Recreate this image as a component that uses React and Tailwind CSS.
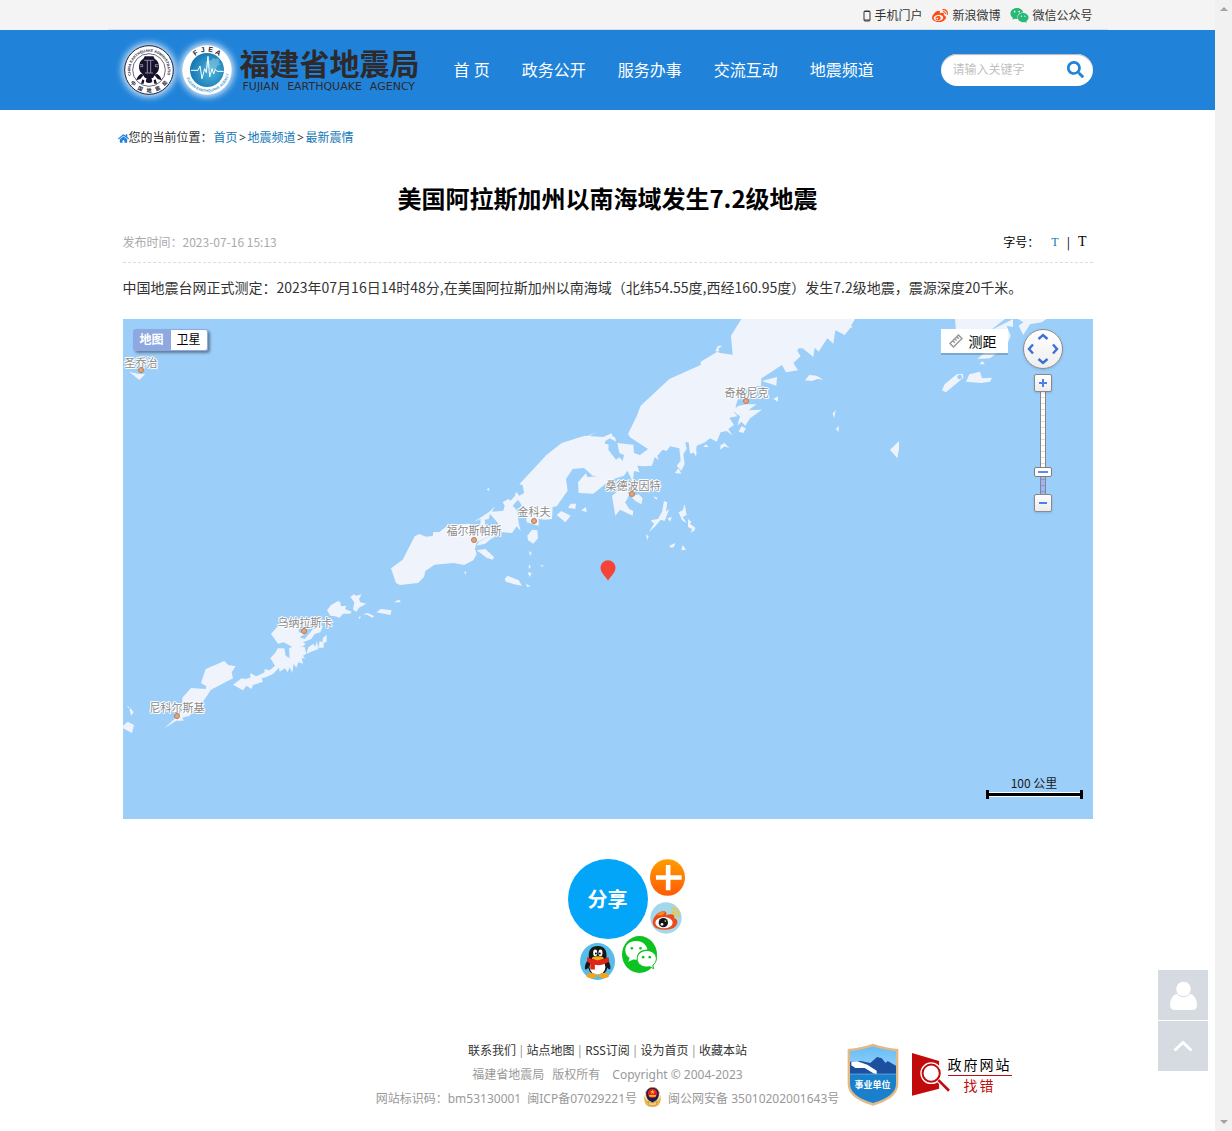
import React, { useState } from 'react';
import { FaHome, FaWeibo, FaWeixin, FaSearch } from 'react-icons/fa';

const navItems = ['首 页', '政务公开', '服务办事', '交流互动', '地震频道'];
const footerLinks = ['联系我们', '站点地图', 'RSS订阅', '设为首页', '收藏本站'];

const towns = [
  { name: '圣乔治', dot: 'left-[15px] top-[48px]', label: 'left-[2px] top-[37px]' },
  { name: '奇格尼克', dot: 'left-[620px] top-[79px]', label: 'left-[602px] top-[67px]' },
  { name: '桑德波因特', dot: 'left-[506px] top-[172px]', label: 'left-[483px] top-[160px]' },
  { name: '金科夫', dot: 'left-[408px] top-[199px]', label: 'left-[395px] top-[186px]' },
  { name: '福尔斯帕斯', dot: 'left-[348px] top-[218px]', label: 'left-[324px] top-[205px]' },
  { name: '乌纳拉斯卡', dot: 'left-[178px] top-[309px]', label: 'left-[155px] top-[297px]' },
  { name: '尼科尔斯基', dot: 'left-[51px] top-[394px]', label: 'left-[27px] top-[382px]' },
];

const ringChars = [
  { char: '中', angle: 50 },
  { char: '国', angle: 25 },
  { char: '地', angle: 0 },
  { char: '震', angle: -25 },
  { char: '局', angle: -50 },
];

const topLetters = [
  { char: 'F', angle: -34 },
  { char: 'J', angle: -12 },
  { char: 'E', angle: 10 },
  { char: 'A', angle: 33 },
];

const Seals = () => (
  <svg viewBox="0 0 330 180" className="h-[60px] w-[110px] overflow-visible" aria-hidden="true">
    <defs>
      <filter id="glow" x="-30%" y="-30%" width="160%" height="160%">
        <feGaussianBlur stdDeviation="9" />
      </filter>
      <radialGradient id="globe" cx="60%" cy="55%" r="60%">
        <stop offset="0" stopColor="#4cb4dc" />
        <stop offset="1" stopColor="#1577b4" />
      </radialGradient>
      <path id="ringTop" d="M24 106A56 56 0 1 1 132 106" />
      <path id="jLow" d="M187 105A67 67 0 0 0 317 105" />
    </defs>
    <circle cx="78" cy="90" r="82" fill="#fff" opacity=".75" filter="url(#glow)" />
    <circle cx="252" cy="90" r="82" fill="#fff" opacity=".75" filter="url(#glow)" />
    <circle cx="78" cy="90" r="73" fill="#fff" stroke="#221d38" strokeWidth="3" />
    <circle cx="78" cy="90" r="49" fill="#fff" stroke="#221d38" strokeWidth="2" />
    <g fill="#221d38" fontFamily="Liberation Sans" fontWeight="700">
      <text fontSize="11">
        <textPath href="#ringTop">CHINA EARTHQUAKE ADMINISTRATION</textPath>
      </text>
      {ringChars.map(({ char, angle }) => (
        <text key={char} x="78" y="157" fontSize="15" textAnchor="middle" fontFamily="Noto Sans CJK SC" transform={`rotate(${angle} 78 90)`}>
          {char}
        </text>
      ))}
    </g>
    <g fill="#17122c">
      <path d="M65 49h26l4 7q13 7 13 25 0 14-11 22l-7 11H66l-7-11Q48 95 48 81q0-18 13-25z" />
      <path d="M54 101l8 4-10 12-12 4q1-11 14-20zM102 101l-8 4 10 12 12 4q-1-11-14-20zM71 112h14l3 13q-10 8-20 0zM58 118l6 3-2 10h-8zM98 118l-6 3 2 10h8z" />
    </g>
    <g stroke="#c9c7d8" strokeWidth="2" fill="none">
      <path d="M51 74h8v6h-8M105 74h-8v6h8M64 61h28M66 99h24M73 62v36M83 62v36" />
    </g>
    <circle cx="252" cy="90" r="74" fill="#fff" />
    <circle cx="252" cy="90" r="51" fill="url(#globe)" />
    <path d="M248 65l16-4 8-7 6 4 6-4 6 8-4 6 8 4-12 6-4 12-12 2-8-8-10-2z" fill="#8ecce6" opacity=".55" />
    <path d="M204 91h21l6-13 6 38 8-30 5 12 5-49 5 62 7-25 5 16 5-14 5 6h20" fill="none" stroke="#fff" strokeWidth="3" />
    <g fill="#2b201f" fontFamily="Liberation Sans" fontWeight="700" fontSize="21">
      {topLetters.map(({ char, angle }) => (
        <text key={char} x="252" y="35" textAnchor="middle" transform={`rotate(${angle} 252 90)`}>
          {char}
        </text>
      ))}
    </g>
    <text fontSize="11" fontFamily="Liberation Sans" fontWeight="700" fill="#3b9bd0">
      <textPath href="#jLow" startOffset="6%">FUJIAN EARTHQUAKE AGENCY</textPath>
    </text>
  </svg>
);

// Coastline of the Alaska Peninsula and the Aleutians
const Coast = () => (
  <svg viewBox="0 0 2910 1500" preserveAspectRatio="xMinYMin slice" className="h-full w-full" aria-hidden="true">
    <g fill="#eff3fc">
      <path d="M18 158l30 7 19 0-18 18z" />
      <path d="M444 945L470 915 525 920 528 940 545 945 530 955 545 960 570 930 600 920 592 940 575 945 565 960 540 970 548 975 540 982 512 986 482 970 465 974z" />
      <path d="M458 1000L464 988 484 988 488 1010 500 1018 498 988 515 980 545 984 550 1004 540 1010 546 1020 536 1016 540 1034 526 1030 520 1046 512 1034 508 1062 500 1045 494 1060 486 1048 470 1058 468 1046 450 1065 430 1074 416 1078 420 1088 390 1098 386 1110 370 1100 360 1114 330 1097 356 1078 368 1080 382 1076 382 1062 400 1072 425 1060 424 1050 440 1054 456 1040 442 1018z" />
      <path d="M550 1004L556 985 572 974 576 984 582 966 586 990zM586 986L590 966 598 970 600 956 611 948 611 968 602 972 602 986z" />
      <path d="M612 874L624 858 645 846 652 850 654 862 670 860 666 870 686 878 682 884 660 884 650 896 636 892 622 890zM682 834L692 826 700 830 716 826 708 840 712 850 730 854 708 866 700 878 690 872 694 850zM706 894l8-2-4 8zM720 886l14-4 20 10-6 4-14-8zM760 880l14-10 32 4-4 14zM815 850l14-7 4 5z" />
      <path d="M234 1092L248 1050 304 1026 316 1038 338 1042 326 1060 330 1078 264 1112 240 1148 212 1170 200 1190 178 1196 182 1205 160 1205 124 1228 150 1204 166 1190 178 1170 178 1136 204 1107 248 1110 250 1102z" />
      <path d="M12 1160l8 6-4 2zM20 1172l2-6 10 14-8 10zM0 1220l14-12 19 10-6 24-27-14z" />
    </g>
    <g fill="#eff3fc" transform="translate(771 0)">
      <path d="M33 748L68 722 104 652 118 645 138 653 158 651 160 639 178 639 204 619 264 614 300 624 330 650 290 670 285 690 290 705 280 724 252 738 220 732 164 737 136 756 132 774 114 792 60 798 48 792z" />
      <path d="M282 608L310 590 328 578 345 562 336 578 370 575 374 560 368 550 385 540 392 545 405 530 408 518 418 530 432 522 428 498 418 496 500 407 545 372 590 358 615 350 670 354 695 343 698 352 706 356 708 368 690 358 676 366 674 374 686 376 685 392 708 422 718 415 728 426 732 408 718 402 712 372 760 377 762 402 780 408 804 390 750 355 744 345 770 292 782 260 868 180 962 138 962 128 1012 98 1020 102 1058 107 1053 50 1084 0 1425 0 1413 20 1418 24 1410 28 1394 48 1366 34 1360 74 1342 58 1316 98 1304 86 1300 114 1268 88 1256 88 1252 96 1262 112 1240 132 1254 154 1218 160 1206 138 1144 178 1143 202 1108 202 1084 225 1072 245 1066 265 1085 268 1082 280 1062 280 1072 292 1048 296 1062 318 1045 330 1058 350 1040 336 1022 340 1010 368 990 358 975 370 950 380 948 398 930 404 926 370 916 370 920 390 910 405 914 435 904 455 890 440 902 425 898 388 870 382 860 396 848 392 832 410 836 424 824 414 816 440 790 442 772 440 778 460 762 456 758 490 750 470 742 455 732 470 690 484 640 524 596 522 594 490 618 462 622 474 655 472 638 470 612 447 578 450 558 480 563 515 530 562 518 564 516 600 498 602 476 600 476 620 466 618 440 610 436 575 414 542 398 560 412 575 416 612 422 636 410 622 396 642 366 640 362 622 330 585 326 600 314 602 316 620 300 625 302 600z" />
      <path d="M290 680L296 668 340 645 362 642 330 662 316 674zM290 694L316 690 342 714 338 722 320 716zM374 780L382 770 416 784 426 800 402 796 378 788zM442 650L456 632 472 634 474 658 460 674 444 664zM447 696l8 6-5 9zM489 682l5 8zM447 736l6 8-7 5zM480 738l13 2-7 3zM443 760l12 2-6 12zM438 794l14 8-10 2zM530 588L544 576 572 590 556 610zM576 596l10 10zM564 566L572 554 588 554 586 570zM604 574l14-10 2 16zM570 650l6-8zM600 634l6 6zM530 700l9 8zM320 512l7-6 1 10zM252 758l6 0 0 10zM42 850l14-8 6 8z" />
      <path d="M696 530L732 502 750 512 732 540 722 538 750 520 742 540 735 550 748 570 760 576 758 590 720 572 706 590z" />
      <path d="M752 532L776 526 788 538 784 556 766 546zM819 532l14 4-4 6zM826 545l10 8zM852 546L862 550 858 578 868 570 854 606 842 602 826 622 806 640 822 614 812 604 834 600 846 578zM798 646l8 6-4 12zM862 598l14-4-6 14zM896 580L908 574 914 556 920 588 908 594 920 612 906 604zM924 600L934 608 930 614 946 626 944 634 932 642 936 630 924 624zM868 680L886 672 882 684 872 686zM904 694L908 678 918 692z" />
      <path d="M970 384l8-8 8 8zM1020 392L1022 378 1034 372 1048 388 1034 382zM940 400l10-4-2 16zM884 462L896 448 904 464zM1006 96L1014 80 1028 80 1016 88 1016 98zM610 356L652 338 618 356z" />
      <path d="M1072 262L1098 256 1130 256 1105 274 1146 272 1110 298 1096 320 1084 308 1072 320 1080 292 1066 282zM1076 338L1084 322 1098 328 1090 342z" />
      <path d="M1145 186l46-12-2 26zM1275 184L1288 168 1310 170 1330 182 1312 180 1296 186zM1180 240l14-8 0 16zM1358 284l9-12-4 26zM1368 330l8-10 0 20zM1530 392L1557 366 1557 390 1552 418z" />
    </g>
    <g fill="#eff3fc" transform="translate(1851 0)">
      <path d="M645 0L795 0 750 35 790 15 819 0 819 24 800 20 812 50 800 80 750 118 712 120 735 100 650 60zM834 0L920 0 905 10 870 16 850 48 836 20 850 10zM718 136L728 126 734 136z" />
      <path d="M606 214L614 196 650 166 668 164 670 176 618 220zM678 188L688 166 720 158 726 178 756 176 750 188 722 192z" />
    </g>
    <circle cx="2510" cy="174" r="7" fill="#9bcef9" />
  </svg>
);

const Chevron = ({ className }) => (
  <svg viewBox="0 0 12 12" className={className} fill="none" stroke="#3f6fd6" strokeWidth="2.4">
    <path d="M1.500 8L6 4l4.500 4" />
  </svg>
);

const zoomButton =
  'relative z-10 flex h-[18px] w-[18px] items-center justify-center rounded-[2px] border border-[#8a8a8a] bg-gradient-to-b from-white to-[#ececec] shadow';

const MapPanel = () => {
  const [zoom, setZoom] = useState(6);
  return (
    <section className="relative h-[500px] overflow-hidden bg-[#9bcef9]">
      <Coast />
      {towns.map((town) => (
        <React.Fragment key={town.name}>
          <span
            className={`absolute text-[11px] leading-3 whitespace-nowrap text-[#8b8b8b] [text-shadow:1px_0_#fff,-1px_0_#fff,0_1px_#fff,0_-1px_#fff,1px_1px_#fff,-1px_-1px_#fff] ${town.label}`}
          >
            {town.name}
          </span>
          <span className={`absolute h-[6px] w-[6px] rounded-full border border-[#b97a52] bg-[#e5a67c] ${town.dot}`} />
        </React.Fragment>
      ))}

      <svg viewBox="0 0 16 21" className="absolute top-[241px] left-1/2 h-[21px] w-4 -translate-x-1/2">
        <path d="M8 21C7 17.500 .5 13.500 .5 7.800a7.500 7.500 0 0 1 15 0C15.500 13.500 9 17.500 8 21z" fill="#f64436" />
      </svg>

      <div className="absolute top-[10px] left-[10px] flex h-[22px] rounded-[3px] text-xs shadow-[2px_2px_3px_rgba(0,0,0,0.4)]">
        <button className="w-[38px] rounded-l-[3px] bg-[#8ea8e0] pb-[2px] font-bold text-white">地图</button>
        <button className="w-[37px] rounded-r-[3px] border border-l-0 border-[#8ea8e0] bg-white pb-[2px] text-black">卫星</button>
      </div>

      <button className="absolute top-[10px] right-[85px] flex h-6 w-[67px] items-center gap-[6px] bg-white pl-2 text-sm text-black shadow-[0_2px_0_rgba(90,130,170,0.5)]">
        <svg viewBox="0 0 14 14" className="h-[14px] w-[14px]" fill="none" stroke="#999" strokeWidth="1.500">
          <path d="M1 9.500L9.500 1 13 4.500 4.500 13z" />
          <path d="M4 7l1.800 1.800M6 5l1.500 1.500M8 3l1.800 1.800" />
        </svg>
        测距
      </button>

      <div className="absolute top-[10px] right-[30px] flex w-10 flex-col items-center">
        <div className="grid h-10 w-10 grid-cols-3 grid-rows-3 place-items-center rounded-full border border-[#8d8d8d] bg-gradient-to-b from-white to-[#eee] p-px shadow">
          <button aria-label="向上" className="col-start-2 row-start-1"><Chevron className="h-3 w-3" /></button>
          <button aria-label="向左" className="col-start-1 row-start-2"><Chevron className="h-3 w-3 -rotate-90" /></button>
          <button aria-label="向右" className="col-start-3 row-start-2"><Chevron className="h-3 w-3 rotate-90" /></button>
          <button aria-label="向下" className="col-start-2 row-start-3"><Chevron className="h-3 w-3 rotate-180" /></button>
        </div>
        <button aria-label="放大" className={`mt-[5px] ${zoomButton}`} onClick={() => setZoom(Math.min(zoom + 1, 19))}>
          <svg viewBox="0 0 8 8" className="h-2 w-2" fill="#4d80e8"><path d="M3 0h2v3h3v2H5v3H3V5H0V3h3z" /></svg>
        </button>
        <div className="relative h-[102px] w-[6px] border-x border-[#868686] bg-[repeating-linear-gradient(#fff_0_5px,#ddd_5px_6px)]">
          <div className="absolute inset-x-0 bottom-0 h-5 bg-[repeating-linear-gradient(#9db5f8_0_5px,#7f99e6_5px_6px)]" />
          <input
            type="range"
            min="3"
            max="19"
            value={zoom}
            aria-label="缩放级别"
            onChange={(e) => setZoom(Number(e.target.value))}
            className="absolute -top-px -left-[7px] h-[104px] w-[18px] appearance-none bg-transparent [direction:rtl] [writing-mode:vertical-lr] [&::-webkit-slider-thumb]:h-[10px] [&::-webkit-slider-thumb]:w-[18px] [&::-webkit-slider-thumb]:appearance-none [&::-webkit-slider-thumb]:rounded-[2px] [&::-webkit-slider-thumb]:border [&::-webkit-slider-thumb]:border-[#808080] [&::-webkit-slider-thumb]:bg-[linear-gradient(90deg,#fff_3px,#5b8cf0_3px_13px,#fff_13px)] [&::-webkit-slider-thumb]:shadow-[inset_0_3px_0_#fff,inset_0_-3px_0_#fff]"
          />
        </div>
        <button aria-label="缩小" className={zoomButton} onClick={() => setZoom(Math.max(zoom - 1, 3))}>
          <span className="h-[2px] w-2 bg-[#4d80e8]" />
        </button>
      </div>

      <div className="absolute right-[10px] bottom-5 w-[97px] text-center text-xs leading-[14px] text-[#1a1a1a]">
        100 公里
        <div className="flex h-[9px] items-center border-x-[3px] border-black">
          <div className="h-[5px] w-full border-y border-white bg-black" />
        </div>
      </div>
    </section>
  );
};

const Share = () => (
  <div className="relative mx-auto mt-10 h-20 w-20">
    <button className="h-20 w-20 rounded-full bg-[#03a5f9] text-xl font-bold text-white">分享</button>
    <button aria-label="更多" className="absolute top-0 left-[82px]">
      <svg viewBox="0 0 106 111" className="h-[37px] w-[35px]">
        <defs>
          <linearGradient id="orange" x2="0" y2="1"><stop stopColor="#ff9d00" /><stop offset="1" stopColor="#ff5a05" /></linearGradient>
        </defs>
        <ellipse cx="53" cy="55.500" rx="53" ry="55.500" fill="url(#orange)" />
        <path d="M48 18h14v31h34v13H62v32H48V62H18V49h30z" fill="#fff" />
      </svg>
    </button>
    <button aria-label="新浪微博" className="absolute top-[43px] left-[82px]">
      <svg viewBox="0 0 96 96" className="h-8 w-8">
        <circle cx="48" cy="48" r="47" fill="#a3d8ec" />
        <path d="M8 62C8 42 30 24 44 28q8 3 4 12 14-6 22-2 6 4 2 10 12 4 10 15-4 20-38 20Q10 83 8 62z" fill="#ec4a18" />
        <path d="M20 40q14-16 25-10-2 8-8 10z" fill="#f98a24" />
        <ellipse cx="42" cy="62" rx="26" ry="17" fill="#fff" />
        <circle cx="40" cy="62" r="14" fill="#151515" />
        <circle cx="36" cy="67" r="4" fill="#fff" /><circle cx="46" cy="57" r="2.500" fill="#ddd" />
        <path d="M64 18q23 1 22 28M64 30q11 1 11 14" fill="none" stroke="#f5c535" strokeWidth="6" />
      </svg>
    </button>
    <button aria-label="微信" className="absolute top-[77px] left-[54px]">
      <svg viewBox="0 0 106 112" className="h-[37px] w-[35px]">
        <ellipse cx="53" cy="56" rx="53" ry="56" fill="#0cc321" />
        <path d="M42 15C22 15 10 27 10 43c0 11 5 18 13 23l-4 12 15-7 12 1c-3-20 10-31 31-31-3-17-17-26-35-26z" fill="#fff" />
        <path d="M75 44c-17 0-29 11-29 25s12 25 29 25l9-1 12 6-3-10c6-5 11-11 11-20 0-14-12-25-29-25z" fill="#fff" stroke="#0cc321" strokeWidth="3" />
        <circle cx="30" cy="37" r="4" fill="#0cc321" /><circle cx="56" cy="37" r="4" fill="#0cc321" />
        <circle cx="64" cy="64" r="4" fill="#0cc321" /><circle cx="84" cy="64" r="4" fill="#0cc321" />
      </svg>
    </button>
    <button aria-label="QQ" className="absolute top-[84px] left-[12px]">
      <svg viewBox="0 0 106 112" className="h-[37px] w-[35px]">
        <ellipse cx="53" cy="56" rx="53" ry="56" fill="#55bdea" />
        <path d="M27 46C24 20 35 9 54 9s29 12 26 37c9 12 14 22 12 33q-3 4-9-4-4 21-29 21T25 75q-6 8-10 4c-2-10 4-22 12-33z" fill="#161616" />
        <ellipse cx="53" cy="73" rx="24" ry="23" fill="#fff" />
        <ellipse cx="46" cy="30" rx="6" ry="10" fill="#fff" /><ellipse cx="62" cy="30" rx="6" ry="10" fill="#fff" />
        <circle cx="48" cy="32" r="3" /><circle cx="60" cy="32" r="3" />
        <ellipse cx="54" cy="46" rx="18" ry="6" fill="#f5ab16" />
        <path d="M22 42q31 20 64 0l3 14q-24 15-44 10v14H31V62l-10-6z" fill="#df2418" />
        <ellipse cx="35" cy="99" rx="16" ry="8" fill="#f2a51c" /><ellipse cx="72" cy="99" rx="16" ry="8" fill="#f2a51c" />
      </svg>
    </button>
  </div>
);

const PoliceBadge = () => (
  <svg viewBox="0 0 56 60" className="-mt-1 h-5 w-[19px]" aria-hidden="true">
    <path d="M4 24Q-2 60 28 60T52 24q-4 22-24 22T4 24z" fill="#edb54c" />
    <path d="M8 16Q14 1 28 1t20 15q2 24-20 31Q6 40 8 16z" fill="#181b56" stroke="#e3b44f" strokeWidth="2" />
    <circle cx="28" cy="19" r="14" fill="#e32219" />
    <path d="M28 8l2 5h5l-4 3 2 5-5-3-5 3 2-5-4-3h5zM18 24h20v5H18z" fill="#f6bc35" />
    <path d="M14 42l14 6 14-6-4 14H18z" fill="#f5cf7d" stroke="#c58a2c" strokeWidth="2" />
  </svg>
);

const UnitBadge = () => (
  <a href="#unit" aria-label="事业单位" className="relative block h-[63px] w-[52px]">
    <svg viewBox="0 0 156 189" className="h-full w-full">
      <defs>
        <linearGradient id="sky" x2="0" y2="1"><stop stopColor="#66bdf5" /><stop offset=".5" stopColor="#9bd5fa" /></linearGradient>
      </defs>
      <path d="M2 18Q45 14 78 2q33 12 76 16v105q0 43-76 65Q2 166 2 123z" fill="#e5b981" />
      <path d="M9 25Q48 20 78 10q30 10 69 15v97q0 38-69 58Q9 160 9 122z" fill="url(#sky)" />
      <path d="M9 92V56l32-2 29 6 20-18 14 4 12 14 6-6 25 14v24z" fill="#1c4f9e" />
      <path d="M9 94h138v28q0 38-69 58Q9 160 9 122z" fill="#1b80cc" />
      <path d="M13 56l18-1 30 10 28 18 0 10-10-2-26-16-28 0-12-8z" fill="#fff" />
    </svg>
    <span className="absolute inset-x-0 top-[35px] text-center text-[9px] leading-[14px] font-bold text-white">事业单位</span>
  </a>
);

const ErrorReport = () => (
  <a href="#report" className="flex items-center text-sm">
    <svg viewBox="0 0 118 130" className="h-[43px] w-[39px]" aria-hidden="true">
      <path d="M0 0l82 24v84L0 129z" fill="#c20a0d" />
      <circle cx="58" cy="61" r="27" fill="#c20a0d" stroke="#fff" strokeWidth="12" />
      <circle cx="58" cy="61" r="26" fill="#fff" stroke="#c20a0d" strokeWidth="6" />
      <path d="M82 84l32 32" stroke="#fff" strokeWidth="14" />
      <path d="M80 82l32 32" stroke="#c20a0d" strokeWidth="8" />
    </svg>
    <span className="-ml-[3px] flex flex-col pt-[3px] text-center leading-5 tracking-[2px]">
      <span className="border-b border-[#c20a0d] text-black">政府网站</span>
      <span className="text-[#c20a0d]">找错</span>
    </span>
  </a>
);

const App = () => {
  const [keyword, setKeyword] = useState('');

  return (
    <div className="flex min-h-screen bg-white font-['Noto_Sans','Noto_Sans_CJK_SC',sans-serif] text-xs text-[#333]">
      <div className="min-w-0 flex-1">
        <div className="bg-[#f4f4f4]">
          <div className="mx-auto flex h-[30px] max-w-[1000px] items-center justify-end gap-[10px] border-b border-[#d3e0ec] px-[15px] pt-[2px]">
            <a href="#mobile" className="flex items-center gap-[3px]">
              <svg viewBox="0 0 8 12" className="h-3 w-2" fill="none" stroke="#333">
                <rect x="1" y="1" width="6" height="10" rx="1" />
                <path d="M1 1.500h6M1 10h6" />
              </svg>
              手机门户
            </a>
            <a href="#weibo" className="flex items-center gap-1"><FaWeibo className="h-4 w-4 text-[#ff4a0c]" />新浪微博</a>
            <a href="#wechat" className="flex items-center gap-[3px]"><FaWeixin className="h-[19px] w-[19px] text-[#2bb877]" />微信公众号</a>
          </div>
        </div>

        <header className="bg-[#2083d9]">
          <div className="mx-auto flex h-20 max-w-[1000px] items-center px-[15px]">
            <a href="#home" className="flex items-center gap-[7px] text-[#2e2a2b]">
              <Seals />
              <span className="flex flex-col">
                <span className="text-[30px] leading-8 font-bold">福建省地震局</span>
                <span className="flex gap-2 pt-px pl-[3px] font-['DejaVu_Sans'] text-[11px] leading-3">
                  <span>FUJIAN</span>
                  <span>EARTHQUAKE</span>
                  <span>AGENCY</span>
                </span>
              </span>
            </a>
            <nav className="ml-[34px] flex gap-8 text-base whitespace-nowrap text-white">
              {navItems.map((item) => (
                <a key={item} href="#nav">{item}</a>
              ))}
            </nav>
            <form className="ml-auto flex h-8 w-[152px] items-center rounded-full bg-white px-3 shadow-[inset_0_1px_1px_#b9b9b9]">
              <input
                value={keyword}
                onChange={(e) => setKeyword(e.target.value)}
                placeholder="请输入关键字"
                aria-label="请输入关键字"
                className="w-full min-w-0 outline-none placeholder:text-[#bfbfbf]"
              />
              <button type="button" aria-label="搜索" className="-mr-[3px] pb-[2px] text-[#2083d9]"><FaSearch className="h-[17px] w-[17px]" /></button>
            </form>
          </div>
        </header>

        <div className="mx-auto flex max-w-[1000px] items-center px-[10px] pt-5 leading-4">
          <FaHome className="h-[11px] w-[11px] text-[#2083d9]" />
          <span className="mr-px">您的当前位置：</span>
          <a href="#home" className="text-[#1277b8]">首页</a>
          <span className="w-[10px] text-center">&gt;</span>
          <a href="#channel" className="text-[#1277b8]">地震频道</a>
          <span className="w-[10px] text-center">&gt;</span>
          <a href="#latest" className="text-[#1277b8]">最新震情</a>
        </div>

        <main className="mx-auto max-w-[1000px] px-[15px] font-['Noto_Sans_CJK_SC',sans-serif]">
          <h1 className="mt-[34px] text-center text-2xl leading-9 font-bold text-black">美国阿拉斯加州以南海域发生7.2级地震</h1>
          <div className="mt-[5px] flex h-[42px] items-center justify-between border-b border-dashed border-[#ddd]">
            <span className="text-[#aaa]">发布时间：2023-07-16 15:13</span>
            <span className="flex items-center pr-[6px] text-black">
              <span className="mr-3">字号：</span>
              <button className="font-['Liberation_Serif'] text-xs text-[#1277b8]">T</button>
              <span className="mx-2">|</span>
              <button className="font-['Liberation_Serif'] text-sm">T</button>
            </span>
          </div>
          <p className="mt-[9px] mb-[17px] text-sm leading-[30px]">
            中国地震台网正式测定：2023年07月16日14时48分,在美国阿拉斯加州以南海域（北纬54.55度,西经160.95度）发生7.2级地震，震源深度20千米。
          </p>
          <MapPanel />
          <Share />
        </main>

        <footer className="mt-[100px] grid grid-cols-[1fr_auto_1fr] pb-5 text-center leading-6 text-[#999]">
          <div className="col-start-2 min-w-[470px] whitespace-nowrap">
            <p className="flex justify-center gap-[2px]">
              {footerLinks.map((link, i) => (
                <React.Fragment key={link}>
                  {i > 0 && <span>|</span>}
                  <a href="#footer" className="text-[#333]">{link}</a>
                </React.Fragment>
              ))}
            </p>
            <p className="flex justify-center gap-2">
              <span>福建省地震局</span>
              <span>版权所有</span>
              <span className="pl-1">Copyright © 2004-2023</span>
            </p>
            <p className="flex h-6 items-center justify-center gap-[6px]">
              <span>网站标识码：bm53130001</span>
              <span>闽ICP备07029221号</span>
              <PoliceBadge />
              <span>闽公网安备 35010202001643号</span>
            </p>
          </div>
          <div className="flex items-start gap-[13px] pt-1 pl-1">
            <UnitBadge />
            <div className="pt-[9px]"><ErrorReport /></div>
          </div>
        </footer>
      </div>

      <aside className="fixed right-6 bottom-[60px] flex flex-col gap-px">
        <button aria-label="个人中心" className="flex h-[50px] w-[50px] items-center justify-center bg-[#d5dbe1]">
          <svg viewBox="0 0 27 29" className="h-[29px] w-[27px]" fill="#fff">
            <path d="M6 13h15q6 3 6 11 0 5-5 5H5q-5 0-5-5 0-8 6-11z" />
            <circle cx="13.500" cy="8" r="7.800" stroke="#d5dbe1" />
          </svg>
        </button>
        <button aria-label="返回顶部" className="flex h-[50px] w-[50px] items-center justify-center bg-[#d5dbe1]">
          <svg viewBox="0 0 20 12" className="h-3 w-5" fill="none" stroke="#fff" strokeWidth="3"><path d="M1.500 10.500L10 2.500l8.500 8" /></svg>
        </button>
      </aside>

      <div className="flex w-[17px] flex-col items-center justify-between bg-[#f1f1f1] py-[7px]" aria-hidden="true">
        <svg viewBox="0 0 8 4" className="h-1 w-2" fill="#a3a3a3"><path d="M0 4l4-4 4 4z" /></svg>
        <svg viewBox="0 0 8 4" className="h-1 w-2" fill="#a3a3a3"><path d="M0 0l4 4 4-4z" /></svg>
      </div>
    </div>
  );
};

export default App;
